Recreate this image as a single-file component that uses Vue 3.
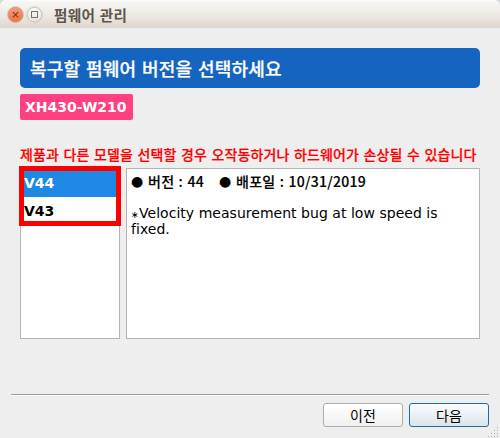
<script setup>
import { ref } from 'vue'

const product = 'XH430-W210'
const versions = ['V44', 'V43']
const selected = ref('V44')
const grip = [
  [10, 2],
  [7, 5], [10, 5],
  [4, 8], [7, 8], [10, 8],
  [1, 11], [4, 11], [7, 11], [10, 11],
]
</script>

<template>
  <div class="window">
    <header class="titlebar">
      <svg class="control" width="18" height="18" viewBox="0 0 18 18">
        <defs>
          <linearGradient id="close-fill" x1="0" y1="0" x2="0" y2="1">
            <stop offset="0" stop-color="#f59a7b" />
            <stop offset="1" stop-color="#f0743f" />
          </linearGradient>
        </defs>
        <circle cx="8.5" cy="8.7" r="8.1" fill="#efe5df" stroke="#d3c8c0" stroke-width="0.8" />
        <circle cx="8.5" cy="8.7" r="7.4" fill="url(#close-fill)" stroke="#dd8a6b" stroke-width="0.7" />
        <path d="M5.9 6.1l5.2 5.2M11.1 6.1l-5.2 5.2" stroke="#743c25" stroke-width="1.2" />
      </svg>
      <svg class="control" width="18" height="18" viewBox="0 0 18 18">
        <defs>
          <linearGradient id="max-fill" x1="0" y1="0" x2="0" y2="1">
            <stop offset="0" stop-color="#fbfaf8" />
            <stop offset="1" stop-color="#e8e2dd" />
          </linearGradient>
        </defs>
        <circle cx="8.5" cy="8.7" r="8.1" fill="#f3eeea" stroke="#dad2cb" stroke-width="0.8" />
        <circle cx="8.5" cy="8.7" r="7.3" fill="url(#max-fill)" stroke="#c4bcb5" stroke-width="0.8" />
        <rect x="5.5" y="5.5" width="6" height="6" fill="none" stroke="#77716b" />
      </svg>
      <span class="caption">펌웨어 관리</span>
    </header>

    <main class="content">
      <h1 class="heading">복구할 펌웨어 버전을 선택하세요</h1>
      <div class="product">{{ product }}</div>
      <p class="warning">제품과 다른 모델을 선택할 경우 오작동하거나 하드웨어가 손상될 수 있습니다</p>
      <div class="panes">
        <div class="versions">
          <div
            v-for="v in versions"
            :key="v"
            class="version"
            :class="{ active: v === selected }"
            @click="selected = v"
          >{{ v }}</div>
          <div class="marker"></div>
        </div>
        <div class="notes">
          <div class="meta">
            <span class="dot">●</span><span class="release">버전 : 44</span>
            <span class="dot">●</span><span class="date">배포일 : 10/31/2019</span>
          </div>
          <p class="note"><span class="star">∗</span>Velocity measurement bug at low speed is fixed.</p>
        </div>
      </div>
    </main>

    <footer class="footer">
      <button class="btn">이전</button>
      <button class="btn primary">다음</button>
    </footer>
    <svg class="grip" width="12" height="12">
      <rect v-for="([x, y], i) in grip" :key="i" :x="x" :y="y" width="1" height="1" fill="#a9a9a9" />
    </svg>
  </div>
</template>

<style>
body {
  margin: 0;
  background: #d9d9d9;
}
</style>

<style scoped>
* {
  box-sizing: border-box;
}
.window {
  position: relative;
  display: flex;
  flex-direction: column;
  width: 500px;
  height: 438px;
  background: #eeeeee;
  border-radius: 6px 6px 0 0;
  overflow: hidden;
  font-family: "DejaVu Sans", "Noto Sans CJK KR", sans-serif;
  font-size: 14px;
  color: #000;
}
.titlebar {
  display: flex;
  align-items: center;
  height: 28px;
  flex: none;
  padding: 1px 0 0 7px;
  gap: 1px;
  background: linear-gradient(#f8f7f5, #efebe7 45%, #dfd6cf);
  border-top: 1px solid #fdfcfb;
}
.control {
  flex: none;
}
.caption {
  margin-left: 9px;
  font: bold 14.6px/20px "Noto Sans CJK KR", sans-serif;
  word-spacing: 1px;
  letter-spacing: 0.3px;
  color: #5d554c;
}
.content {
  display: flex;
  flex-direction: column;
  align-items: flex-start;
  height: 366px;
  padding: 20px 20px 0;
}
.heading {
  width: 460px;
  height: 40px;
  margin: 0;
  padding-left: 10px;
  border-radius: 5px;
  background: #1565c0;
  color: #fff;
  font: 500 18px/41px "Noto Sans CJK KR", sans-serif;
  letter-spacing: 0.15px;
  word-spacing: 1.7px;
  -webkit-text-stroke: 0.25px #fff;
  white-space: nowrap;
}
.product {
  width: 113px;
  height: 26px;
  margin-top: 6px;
  padding-left: 5px;
  border-radius: 2px;
  background: #ff4081;
  color: #fff;
  font-weight: bold;
  line-height: 26px;
}
.warning {
  height: 20px;
  margin: 24px 0 0;
  font: 500 14px/20px "Noto Sans CJK KR", sans-serif;
  letter-spacing: 0.14px;
  word-spacing: 1.15px;
  -webkit-text-stroke: 0.2px #f00;
  color: #f00;
  white-space: nowrap;
}
.panes {
  display: flex;
  gap: 6px;
  margin-top: 4px;
}
.versions,
.notes {
  height: 171px;
  border: 1px solid #b4b4b4;
  background: #fff;
}
.versions {
  position: relative;
  width: 100px;
  padding-top: 1px;
}
.version {
  height: 28px;
  padding-left: 3px;
  font-weight: bold;
  line-height: 28px;
}
.version.active {
  height: 27px;
  background: #1e88e5;
  line-height: 27px;
  color: #fff;
}
.marker {
  position: absolute;
  left: -2px;
  top: -3px;
  width: 102px;
  height: 60px;
  border: 5px solid #f00;
}
.notes {
  width: 354px;
  padding: 4px;
}
.meta {
  display: flex;
  height: 16px;
  font: 500 14px/16px "Noto Sans CJK KR", sans-serif;
  -webkit-text-stroke: 0.15px #000;
  white-space: nowrap;
}
.dot {
  width: 17px;
  font-family: "DejaVu Sans", sans-serif;
  line-height: 17px;
}
.release,
.date {
  letter-spacing: 0.27px;
  word-spacing: 0.9px;
}
.release {
  width: 71px;
}
.note {
  margin: 16px 0 0;
  letter-spacing: 0.03px;
  line-height: 16px;
}
.star {
  font-size: 9.5px;
  line-height: 1;
}
.footer {
  display: flex;
  justify-content: flex-end;
  gap: 6px;
  height: 42px;
  margin: 0 11px;
  padding-top: 8px;
  border-top: 1px solid #9b9b9b;
  box-shadow: inset 0 1px #fff;
}
.btn {
  width: 80px;
  height: 24px;
  padding: 0;
  border: 1px solid #adadad;
  border-radius: 3px;
  background: linear-gradient(#ffffff, #f0f0f0);
  color: #000;
  font: 14px/20px "Noto Sans CJK KR", sans-serif;
}
.btn.primary {
  border-color: #1f6d9e;
  background: linear-gradient(#fafcfd, #dce4ea);
}
.grip {
  position: absolute;
  right: 1px;
  bottom: 1px;
}
</style>
